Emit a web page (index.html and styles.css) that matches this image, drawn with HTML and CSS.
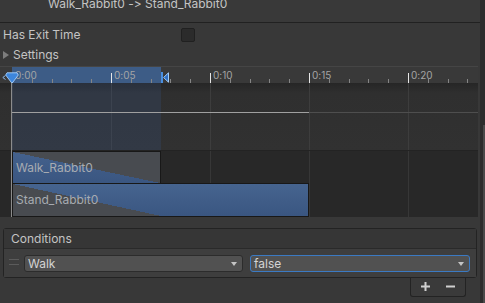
FILE: index.html
```html
<!DOCTYPE html>
<html lang="en">
<head>
    <meta charset="UTF-8">
    <meta name="viewport" content="width=device-width, initial-scale=1.0">
    <title>Transition Inspector</title>
    <link rel="stylesheet" href="styles.css">
</head>
<body>
    <div id="inspector">
        <div id="content">
            <div class="title-bar"><span class="title-text">Walk_Rabbit0 -&gt; Stand_Rabbit0</span></div>

            <div class="field-row">
                <span class="field-label">Has Exit Time</span>
                <span class="checkbox"></span>
            </div>
            <div class="foldout"><span class="fold-arrow"></span>Settings</div>

            <div class="timeline">
                <div class="ruler">
                    <div class="ruler-range"></div>
                    <div class="minor-ticks"></div>
                    <span class="major" style="left: 12px;">0:00</span>
                    <span class="major" style="left: 111px;">0:05</span>
                    <span class="major" style="left: 210px;">0:10</span>
                    <span class="major" style="left: 309px;">0:15</span>
                    <span class="major" style="left: 408px;">0:20</span>
                    <!-- transition start / end handles -->
                    <svg class="start-handle" width="17" height="12" viewBox="0 0 17 12">
                        <path d="M3.5 3.5 L0.8 5.5 L3.5 7.5" fill="none" stroke="#8fb8e8" stroke-width="1"/>
                        <polygon points="5,0.8 15,0.8 16.3,3 10,11.3 3.7,3" fill="#3d86dc" stroke="#a9d0fa" stroke-width="0.9"/>
                    </svg>
                    <svg class="end-handle" width="9" height="11" viewBox="0 0 9 11">
                        <rect x="0" y="0" width="2" height="11" fill="#4a8fe0"/>
                        <polygon points="2.6,5.5 7.5,0.8 7.5,10.2" fill="#2f6fc2" stroke="#a4cdf8" stroke-width="1"/>
                    </svg>
                </div>
                <div class="curve-track">
                    <div class="track-range"></div>
                    <div class="curve-line"></div>
                </div>
                <div class="clip-track">
                    <div class="clip walk"><span>Walk_Rabbit0</span></div>
                    <div class="clip stand"><span>Stand_Rabbit0</span></div>
                </div>
                <div class="playhead"></div>
            </div>

            <div class="conditions">
                <div class="cond-header">Conditions</div>
                <div class="cond-body">
                    <span class="drag-handle"></span>
                    <div class="dropdown walk-param"><span>Walk</span><span class="caret"></span></div>
                    <div class="dropdown value focused"><span>false</span><span class="caret"></span></div>
                </div>
            </div>
            <div class="list-footer">
                <svg width="9" height="9" viewBox="0 0 9 9"><path d="M4.5 0 V9 M0 4.5 H9" stroke="#cfcfcf" stroke-width="2"/></svg>
                <svg width="9" height="9" viewBox="0 0 9 9"><path d="M0 4.5 H9" stroke="#cfcfcf" stroke-width="2"/></svg>
            </div>
        </div>
        <div class="scrollbar"><div class="thumb"></div></div>
    </div>
</body>
</html>
```

FILE: styles.css
```css
body {
    margin: 0;
    background-color: #383838;
    font-family: "Inter", "Noto Sans", sans-serif;
    font-size: 12px;
    font-feature-settings: "calt" 0, "liga" 0;
    font-variant-ligatures: none;
    color: #c4c4c4;
    overflow: hidden;
}

#inspector {
    display: flex;
    width: 485px;
    height: 303px;
}

#content {
    width: 480px;
}

.title-bar {
    height: 22px;
    background-color: #393939;
    border-bottom: 1px solid #212121;
    overflow: hidden;
}

.title-text {
    display: block;
    margin: -3px 0 0 48px;
    line-height: 14px;
}

.field-row {
    display: flex;
    align-items: center;
    height: 18px;
    margin-top: 3px;
    line-height: 18px;
}

.field-label {
    width: 178px;
    padding-left: 3px;
}

.checkbox {
    box-sizing: border-box;
    width: 14px;
    height: 14px;
    background-color: #2b2b2b;
    border: 1px solid #202020;
    border-radius: 2px;
}

.foldout {
    display: flex;
    align-items: center;
    height: 18px;
    margin-top: 2px;
    line-height: 18px;
}

.fold-arrow {
    width: 0;
    height: 0;
    margin: 0 4px 0 3px;
    border-left: 6px solid #7d7d7d;
    border-top: 4px solid transparent;
    border-bottom: 4px solid transparent;
}

/* timeline */
.timeline {
    position: relative;
    width: 478px;
    margin-top: 2px;
}

.ruler {
    position: relative;
    height: 16px;
    background-color: #393939;
    border-top: 1px solid #454545;
}

.ruler-range {
    position: absolute;
    left: 12px;
    top: 0;
    width: 149px;
    height: 16px;
    background-color: #3d5c86;
}

.minor-ticks {
    position: absolute;
    left: 12px;
    right: 0;
    bottom: 0;
    height: 4px;
    background: repeating-linear-gradient(90deg, #858585 0 1px, transparent 1px 19.8px);
}

.major {
    position: absolute;
    top: 0;
    padding-left: 3px;
    font-size: 10px;
    line-height: 16px;
    color: #a4a4a4;
}

.major::before {
    content: "";
    position: absolute;
    left: 0;
    top: 6px;
    width: 1px;
    height: 10px;
    background-color: #e6e6e6;
}

.start-handle {
    position: absolute;
    left: 2px;
    top: 5px;
}

.end-handle {
    position: absolute;
    left: 161px;
    top: 5px;
}

.curve-track {
    position: relative;
    height: 67px;
    background:
        repeating-linear-gradient(90deg, #3d3d3d 0 1px, transparent 1px 99px) 12px 0 / 100% 100% no-repeat,
        linear-gradient(#262626, #2f2f2f 10px, #313131);
}

.track-range {
    position: absolute;
    left: 12px;
    top: 0;
    width: 149px;
    height: 100%;
    background-color: rgba(60, 110, 190, 0.15);
}

.curve-line {
    position: absolute;
    left: 12px;
    right: 0;
    top: 29px;
    height: 1px;
    background: linear-gradient(90deg, #a0a0a0 0 297px, #4e4e4e 297px);
}

.clip-track {
    position: relative;
    height: 67px;
    background:
        repeating-linear-gradient(90deg, #373737 0 1px, transparent 1px 99px) 12px 0 / 100% 100% no-repeat,
        #282828;
    border-top: 1px solid #232323;
    box-sizing: border-box;
}

.clip {
    position: absolute;
    left: 12px;
    box-sizing: border-box;
    border: 1px solid #181818;
    padding-left: 3px;
    color: #a7abb1;
    white-space: nowrap;
}

.clip.walk {
    top: 0;
    width: 149px;
    height: 33px;
    line-height: 31px;
    background:
        linear-gradient(to top right, transparent 50%, #484b50 50%),
        linear-gradient(#44618c, #3a5681);
}

.clip.stand {
    top: 32px;
    width: 297px;
    height: 34px;
    line-height: 32px;
    background:
        linear-gradient(to bottom left, transparent 50%, #484b50 50%) left top / 148px 100% no-repeat,
        linear-gradient(#46648f, #3a5681);
}

.playhead {
    position: absolute;
    left: 11px;
    top: 17px;
    bottom: 0;
    width: 1px;
    background-color: #8c8c8c;
}

/* conditions list */
.conditions {
    width: 474px;
    margin: 11px 0 0 3px;
    border: 1px solid #232323;
    border-radius: 3px;
    box-sizing: border-box;
}

.cond-header {
    height: 19px;
    padding-left: 7px;
    line-height: 19px;
    background-color: #363636;
    border-bottom: 1px solid #2a2a2a;
}

.cond-body {
    display: flex;
    align-items: flex-start;
    height: 28px;
    padding: 6px 6px 0 5px;
    box-sizing: border-box;
    background-color: #3e3e3e;
    gap: 5px;
}

.drag-handle {
    width: 10px;
    height: 4px;
    margin-top: 4px;
    border-top: 1px solid #5b5b5b;
    border-bottom: 1px solid #5b5b5b;
}

.dropdown {
    display: flex;
    align-items: center;
    justify-content: space-between;
    box-sizing: border-box;
    height: 17px;
    padding: 0 5px 0 3px;
    background-color: #515151;
    border: 1px solid #2c2c2c;
    border-radius: 3px;
    line-height: 15px;
    color: #d4d4d4;
}

.walk-param {
    width: 219px;
}

.value {
    width: 220px;
    margin-left: 2px;
}

.dropdown.focused {
    border-color: #3b7ac3;
}

.caret {
    width: 0;
    height: 0;
    border-top: 4px solid #c4c4c4;
    border-left: 3.5px solid transparent;
    border-right: 3.5px solid transparent;
}

.list-footer {
    display: flex;
    align-items: center;
    gap: 16px;
    box-sizing: border-box;
    width: 56px;
    height: 19px;
    margin-left: 410px;
    padding: 0 0 2px 10px;
    background-color: #3a3a3a;
    border: 1px solid #232323;
    border-top: none;
    border-radius: 0 0 3px 3px;
}

.scrollbar {
    width: 5px;
    padding-top: 125px;
    background-color: #2d2d2d;
    box-sizing: border-box;
}

.thumb {
    height: 100%;
    margin-left: 3px;
    background-color: #4a4a4a;
}
```
